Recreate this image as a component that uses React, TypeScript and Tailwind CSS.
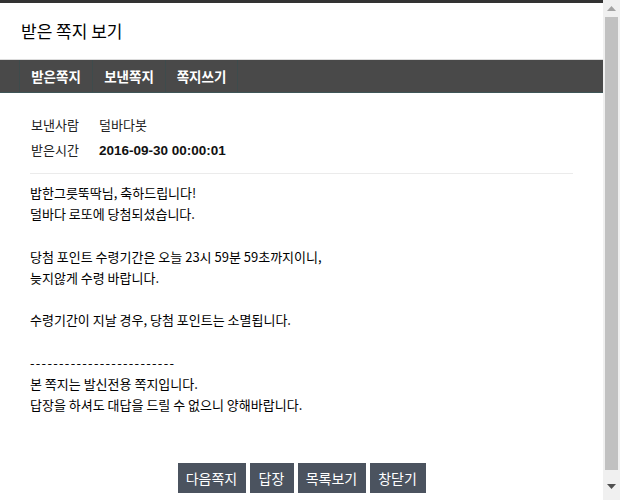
const lines = [
  '밥한그릇뚝딱님, 축하드립니다!',
  '덜바다 로또에 당첨되셨습니다.',
  '',
  '당첨 포인트 수령기간은 오늘 23시 59분 59초까지이니,',
  '늦지않게 수령 바랍니다.',
  '',
  '수령기간이 지날 경우, 당첨 포인트는 소멸됩니다.',
  '',
  '-------------------------',
  '본 쪽지는 발신전용 쪽지입니다.',
  '답장을 하셔도 대답을 드릴 수 없으니 양해바랍니다.',
]

const tabs = ['받은쪽지', '보낸쪽지', '쪽지쓰기']
const buttons = [
  { label: '다음쪽지', w: 'w-[68px]' },
  { label: '답장', w: 'w-[44px]' },
  { label: '목록보기', w: 'w-[68px]' },
  { label: '창닫기', w: 'w-[56px]' },
]

function Scrollbar() {
  return (
    <div className="flex w-[17px] flex-col bg-[#f0f0f0]">
      <div className="flex h-[17px] items-center justify-center">
        <svg width="9" height="5" viewBox="0 0 9 5">
          <path d="M0 5 L4.5 0 L9 5 Z" fill="#a3a3a3" />
        </svg>
      </div>
      <div className="mx-[2px] h-[453px] bg-[#c1c1c1]" />
      <div className="flex flex-1 items-center justify-center pt-[2px]">
        <svg width="9" height="5" viewBox="0 0 9 5">
          <path d="M0 0 L9 0 L4.5 5 Z" fill="#505050" />
        </svg>
      </div>
    </div>
  )
}

export default function App() {
  return (
    <div className="flex h-[500px] overflow-hidden bg-white font-['Noto_Sans_CJK_KR','Liberation_Sans',sans-serif] text-[#222]">
      <div className="flex-1">
        <div className="h-[3px] bg-[#333]" />
        <div className="flex h-[57px] items-center border-b border-[#dcdcdc] px-[21px]">
          <h1 className="text-[17px] font-normal text-black">받은 쪽지 보기</h1>
        </div>
        <nav className="flex h-[33px] border-b border-[#3f5557] bg-[#494949] pl-[19px]">
          {tabs.map((t) => (
            <a
              key={t}
              className="flex w-[73px] items-center justify-center border-l border-[#3e4b4c] text-[13.5px] font-bold text-white last:border-r"
            >
              {t}
            </a>
          ))}
        </nav>

        <div className="px-[30px] pt-[19px]">
          <dl className="text-[13px] leading-[25px]">
            <div className="flex items-baseline">
              <dt className="w-[69px] pl-[1px]">보낸사람</dt>
              <dd>덜바다봇</dd>
            </div>
            <div className="flex items-baseline">
              <dt className="w-[69px] pl-[1px]">받은시간</dt>
              <dd className="font-['Liberation_Sans',sans-serif] text-[13.5px] font-bold text-[#111]">
                2016-09-30 00:00:01
              </dd>
            </div>
          </dl>
          <div className="mt-[10px] border-t border-[#ebebeb]" />

          <div className="pt-[8px] text-[13px] leading-[21.2px] text-black">
            {lines.map((l, i) => (
              <p key={i} className={l.startsWith('---') ? 'tracking-[1.3px]' : ''}>
                {l || '\u00a0'}
              </p>
            ))}
          </div>

          <div className="mt-[48px] flex justify-center gap-[4px]">
            {buttons.map((b) => (
              <button
                key={b.label}
                className={`h-[30px] ${b.w} bg-[#4b535f] text-[14px] text-white`}
              >
                {b.label}
              </button>
            ))}
          </div>
        </div>
      </div>
      <Scrollbar />
    </div>
  )
}
